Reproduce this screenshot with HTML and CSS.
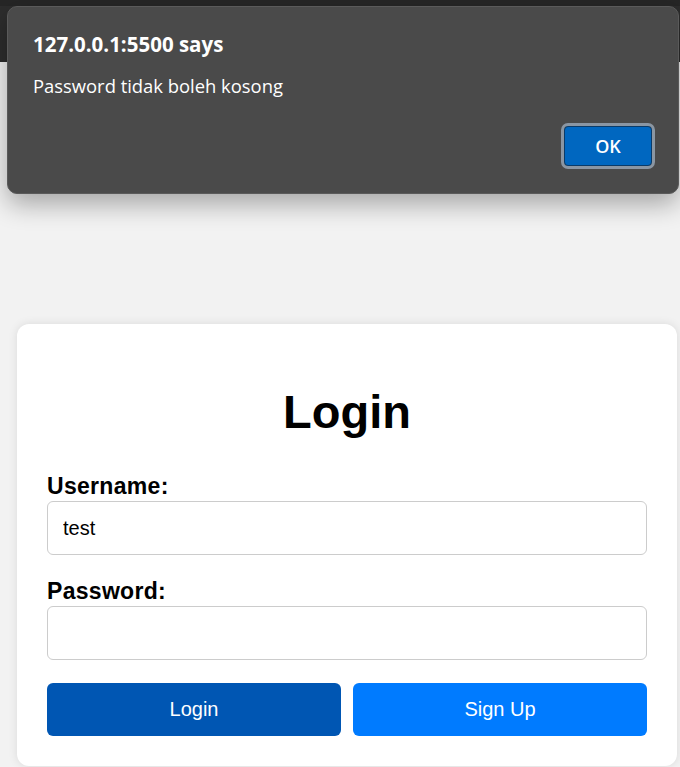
FILE: index.html
```html
<!DOCTYPE html>
<html lang="id">
<head>
<meta charset="utf-8">
<title>Login</title>
<link rel="stylesheet" href="styles.css">
</head>
<body>
  <div class="topbar"></div>
  <div class="card">
    <h1 class="title">Login</h1>
    <form class="form">
      <label class="label" for="username">Username:</label>
      <input class="input input-first" id="username" type="text" value="test">
      <label class="label" for="password">Password:</label>
      <input class="input input-last" id="password" type="password">
      <div class="actions">
        <button type="button" class="btn btn-login">Login</button>
        <button type="button" class="btn btn-signup">Sign Up</button>
      </div>
    </form>
  </div>

  <div class="dialog" role="alertdialog">
    <div class="dialog-title">127.0.0.1:5500 says</div>
    <div class="dialog-msg">Password tidak boleh kosong</div>
    <div class="dialog-actions">
      <button type="button" class="dialog-ok">OK</button>
    </div>
  </div>
</body>
</html>
```
FILE: styles.css
```css
* { box-sizing: border-box; }

html, body {
  margin: 0;
  padding: 0;
}

body {
  background: #f2f2f2;
  font-family: "Liberation Sans", Arial, sans-serif;
  min-height: 767px;
  overflow: hidden;
}

.topbar {
  height: 62px;
  background: linear-gradient(#262626 0, #262626 6px, #2d2d2d 6px);
}

.card {
  width: 660px;
  margin: 262px 0 0 17px;
  padding: 30px;
  background: #fff;
  border-radius: 12px;
  box-shadow: 0 0 10px rgba(0, 0, 0, 0.1);
}

.title {
  margin: 33px 0 37px;
  text-align: center;
  font-size: 47px;
  line-height: 50px;
  font-weight: bold;
  color: #000;
}

.form {
  display: flex;
  flex-direction: column;
}

.label {
  display: block;
  font-size: 23px;
  line-height: 25px;
  letter-spacing: 0.3px;
  font-weight: bold;
  color: #000;
  margin-bottom: 2px;
}

.input {
  display: block;
  width: 100%;
  height: 54px;
  padding: 0 15px;
  border: 1px solid #cccccc;
  border-radius: 6px;
  font-family: "Liberation Sans", Arial, sans-serif;
  font-size: 20px;
  color: #000;
  background: #fff;
  outline: none;
}

.input-first { margin-bottom: 24px; }
.input-last { margin-bottom: 23px; }

.actions {
  display: flex;
  gap: 12px;
}

.btn {
  flex: 1;
  height: 53px;
  border: none;
  border-radius: 6px;
  color: #fff;
  font-family: "Liberation Sans", Arial, sans-serif;
  font-size: 20px;
  cursor: pointer;
}

.btn-login { background: #0056b3; }
.btn-signup { background: #007bff; }

/* Browser alert dialog overlay */
.dialog {
  position: absolute;
  left: 7px;
  top: 6px;
  width: 672px;
  height: 188px;
  background: #4a4a4a;
  border: 1px solid #5a5a5a;
  border-radius: 10px;
  box-shadow: 0 10px 26px rgba(0, 0, 0, 0.32);
  padding: 23px 25px 27px 25px;
  display: flex;
  flex-direction: column;
  font-family: "Open Sans", "Noto Sans", sans-serif;
  color: #fff;
}

.dialog-title {
  font-size: 20.5px;
  font-weight: 700;
  line-height: 28px;
}

.dialog-msg {
  margin-top: 15px;
  font-size: 18.4px;
  line-height: 26px;
}

.dialog-actions {
  margin-top: auto;
  display: flex;
  justify-content: flex-end;
}

.dialog-ok {
  width: 88px;
  height: 40px;
  margin-right: 1px;
  background: #0067c0;
  border: 1px solid #0b3b68;
  border-radius: 4px;
  outline: 3px solid #8a96a3;
  outline-offset: 0;
  color: #fff;
  font-family: "Open Sans", "Noto Sans", sans-serif;
  font-size: 18px;
  font-weight: 600;
  padding: 0;
}
```
